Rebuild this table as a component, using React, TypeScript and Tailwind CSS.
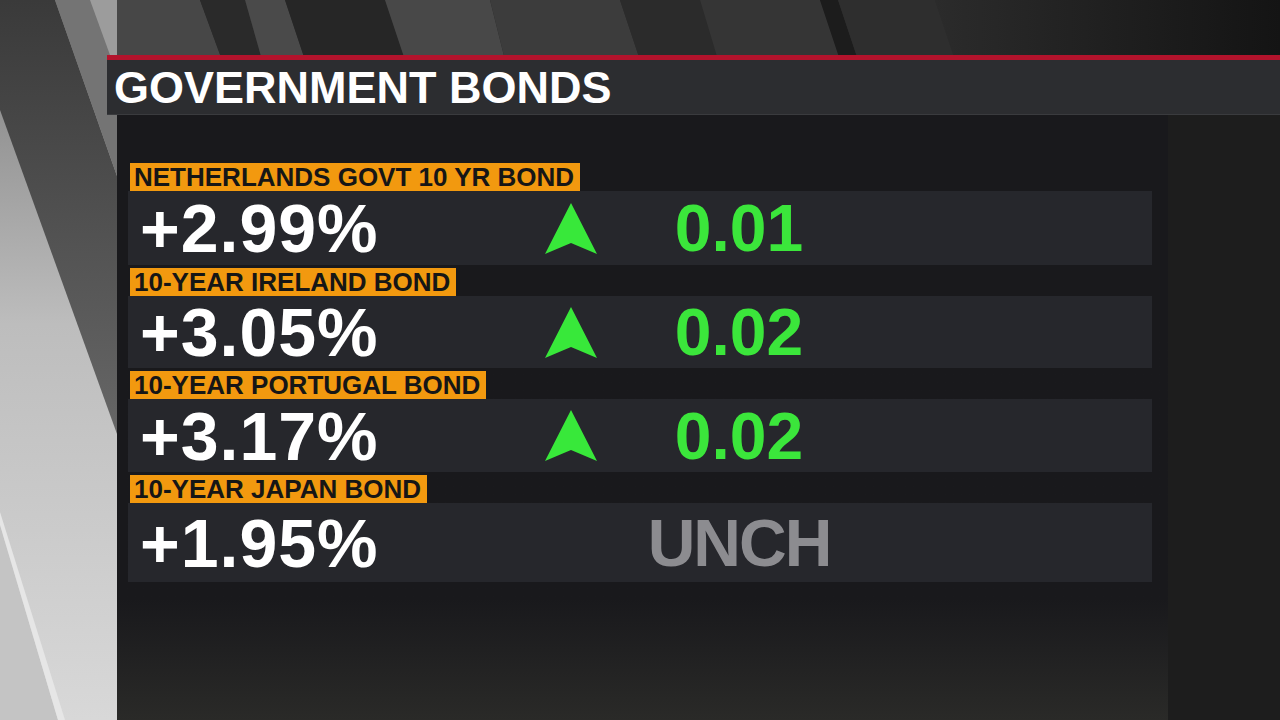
import React from 'react';

interface Bond {
  label: string;
  value: string;
  change: string | null;
  rowHeight: string;
}

const bonds: Bond[] = [
  { label: 'NETHERLANDS GOVT 10 YR BOND', value: '+2.99%', change: '0.01', rowHeight: 'h-[74px]' },
  { label: '10-YEAR IRELAND BOND', value: '+3.05%', change: '0.02', rowHeight: 'h-[72px]' },
  { label: '10-YEAR PORTUGAL BOND', value: '+3.17%', change: '0.02', rowHeight: 'h-[73px]' },
  { label: '10-YEAR JAPAN BOND', value: '+1.95%', change: null, rowHeight: 'h-[79px]' },
];

// studio backdrop: slanted grey stripes left and top
const Backdrop: React.FC = () => (
  <svg className="absolute inset-0" width="1280" height="720" viewBox="0 0 1280 720">
    <defs>
      <linearGradient id="lightGrad" x1="0" y1="0" x2="0" y2="1">
        <stop offset="0" stopColor="#7c7c7c" />
        <stop offset="0.45" stopColor="#bdbdbd" />
        <stop offset="1" stopColor="#d8d8d8" />
      </linearGradient>
      <linearGradient id="darkGrad" x1="0" y1="0" x2="0" y2="1">
        <stop offset="0" stopColor="#3a3a3a" />
        <stop offset="1" stopColor="#6a6a6a" />
      </linearGradient>
      <linearGradient id="topRight" x1="0" y1="0" x2="1" y2="0">
        <stop offset="0" stopColor="#2b2b2b" />
        <stop offset="1" stopColor="#141414" />
      </linearGradient>
    </defs>
    <rect x="0" y="0" width="1280" height="720" fill="#1d1d1d" />
    <rect x="0" y="0" width="130" height="720" fill="url(#lightGrad)" />
    <polygon points="0,0 55,0 130,213 130,470 0,110" fill="url(#darkGrad)" />
    <polygon points="55,0 130,0 130,213" fill="#747474" />
    <polygon points="90,0 130,0 130,110" fill="#9c9c9c" />
    <polygon points="0,525 0,720 58,720" fill="#c4c4c4" />
    <polygon points="0,512 0,525 58,720 65,720" fill="#e6e6e6" />

    <rect x="117" y="0" width="1163" height="60" fill="#2b2b2b" />
    <polygon points="117,0 200,0 222,60 117,60" fill="#474747" />
    <polygon points="200,0 245,0 262,60 222,60" fill="#2a2a2a" />
    <polygon points="245,0 285,0 305,60 262,60" fill="#4a4a4a" />
    <polygon points="285,0 385,0 405,60 305,60" fill="#262626" />
    <polygon points="385,0 490,0 505,60 405,60" fill="#484848" />
    <polygon points="490,0 620,0 640,60 505,60" fill="#3c3c3c" />
    <polygon points="620,0 700,0 718,60 640,60" fill="#2b2b2b" />
    <polygon points="700,0 820,0 840,60 718,60" fill="#353535" />
    <polygon points="820,0 838,0 858,60 840,60" fill="#1c1c1c" />
    <polygon points="838,0 935,0 955,60 858,60" fill="#2e2e2e" />
    <polygon points="935,0 1280,0 1280,60 955,60" fill="url(#topRight)" />
  </svg>
);

const UpArrow: React.FC = () => (
  <svg width="52" height="51" viewBox="0 0 52 51" className="shrink-0">
    <polygon points="26,0 52,51 26,40 0,51" fill="#38e83a" />
  </svg>
);

const App: React.FC = () => {
  return (
    <div className="relative w-[1280px] h-[720px] overflow-hidden bg-[#1d1d1d] font-['Liberation_Sans',Arial,sans-serif]">
      <Backdrop />
      <div className="relative pt-[55px]">
        <div className="ml-[107px] h-[5px] bg-[#b3132c]" />
        <div className="ml-[107px] h-[55px] flex items-center pl-[7px] bg-[#2c2d30] border-b border-[#3a3b3e]">
          <h1 className="text-[45px] leading-none font-bold text-white">GOVERNMENT BONDS</h1>
        </div>
        <div className="ml-[117px] w-[1051px] h-[605px] bg-linear-to-b from-[#19191c] from-80% to-[#2a2a28] pt-[48px] pl-[11px]">
          <div className="flex flex-col gap-[3px]">
            {bonds.map(bond => (
              <div key={bond.label} className="flex flex-col items-start">
                <div className="ml-[2px] h-[28px] pl-[4px] pr-[6px] bg-[#f2990f] text-[26px] leading-[29px] font-bold text-[#161616]">
                  {bond.label}
                </div>
                <div className={`w-[1024px] ${bond.rowHeight} bg-[#26272c] flex items-center`}>
                  <div className="w-[417px] pl-[12px] text-[68px] leading-none font-bold tracking-[1px] text-white">
                    {bond.value}
                  </div>
                  {bond.change ? <UpArrow /> : <div className="w-[52px]" />}
                  <div
                    className={`w-[284px] text-center text-[66px] leading-none font-bold ${
                      bond.change ? 'text-[#3be63b]' : 'text-[#8c8c90] tracking-[-2px]'
                    }`}
                  >
                    {bond.change ?? 'UNCH'}
                  </div>
                </div>
              </div>
            ))}
          </div>
        </div>
      </div>
    </div>
  );
};

export default App;
